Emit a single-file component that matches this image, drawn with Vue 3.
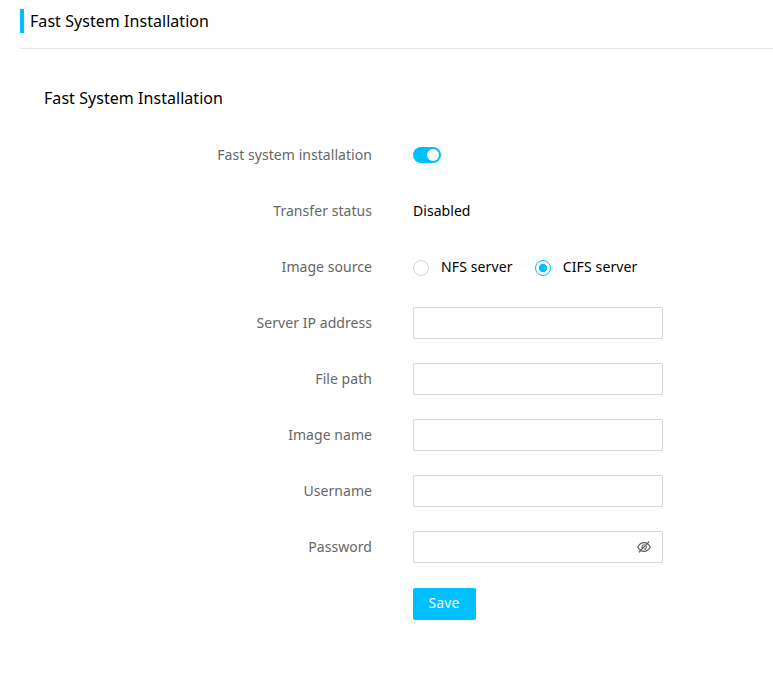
<script setup>
import { ref } from 'vue'

const enabled = ref(true)
const source = ref('cifs')
const sources = [
  { value: 'nfs', label: 'NFS server' },
  { value: 'cifs', label: 'CIFS server' },
]
const fields = [
  { id: 'ip', label: 'Server IP address' },
  { id: 'path', label: 'File path' },
  { id: 'image', label: 'Image name' },
  { id: 'user', label: 'Username' },
]
</script>

<template>
  <main class="page">
    <header class="page-head">
      <h1 class="title">Fast System Installation</h1>
    </header>
    <section class="panel">
      <h2 class="title subtitle">Fast System Installation</h2>
      <form class="form" @submit.prevent>
        <div class="row">
          <span class="label">Fast system installation</span>
          <button
            type="button"
            role="switch"
            class="switch"
            :class="{ on: enabled }"
            :aria-checked="enabled"
            @click="enabled = !enabled"
          ><span class="knob"></span></button>
        </div>
        <div class="row">
          <span class="label">Transfer status</span>
          <span class="value">Disabled</span>
        </div>
        <div class="row">
          <span class="label">Image source</span>
          <div class="radios">
            <label v-for="s in sources" :key="s.value" class="radio">
              <input v-model="source" type="radio" name="source" :value="s.value" />
              <span class="value">{{ s.label }}</span>
            </label>
          </div>
        </div>
        <div v-for="f in fields" :key="f.id" class="row">
          <label class="label" :for="f.id">{{ f.label }}</label>
          <input :id="f.id" class="box" type="text" />
        </div>
        <div class="row">
          <label class="label" for="pwd">Password</label>
          <div class="box password">
            <input id="pwd" type="password" />
            <svg class="eye" viewBox="0 0 14 14" fill="none" stroke="#5c5c5c" stroke-width="1.1">
              <path d="M.7 7C2.2 4.1 4.3 2.6 7 2.600S11.800 4.100 13.300 7C11.800 9.900 9.700 11.400 7 11.400S2.200 9.900.7 7Z" />
              <path d="M5.600 8.700A2.300 2.300 0 0 1 7.600 4.800M9.100 6A2.300 2.300 0 0 1 6.800 9.300" />
              <path d="M1.900 12.400 12.100 1.600" stroke-width="1.300" />
            </svg>
          </div>
        </div>
        <div class="row actions">
          <span></span>
          <button type="submit" class="save">Save</button>
        </div>
      </form>
    </section>
  </main>
</template>

<style>
body {
  background: #fff;
}
</style>

<style scoped>
.page {
  box-sizing: border-box;
  height: 694px;
  padding-left: 20px;
  overflow: hidden;
  font-family: 'Noto Sans', 'Open Sans', sans-serif;
  font-size: 14px;
  letter-spacing: 0.05px;
  color: #000;
}
.page-head {
  box-sizing: border-box;
  height: 49px;
  padding-top: 9px;
  border-bottom: 1px solid #e6e6e6;
}
.title {
  margin: 0;
  padding-left: 6px;
  border-left: 4px solid #00bfff;
  font-size: 16px;
  font-weight: 400;
  line-height: 24px;
  letter-spacing: 0.05px;
}
.panel {
  padding: 37px 24px 0;
}
.subtitle {
  padding-left: 0;
  border-left: 0;
}
.form {
  display: grid;
  gap: 24px;
  margin-top: 29px;
}
.row {
  display: grid;
  grid-template-columns: 328px 250px;
  column-gap: 41px;
  align-items: center;
  height: 32px;
}
.actions {
  margin-top: 1px;
}
.label {
  color: #666;
  text-align: right;
  line-height: 32px;
}
.value {
  line-height: 32px;
}
.switch {
  box-sizing: border-box;
  display: flex;
  width: 28px;
  height: 16px;
  padding: 2px;
  border: 0;
  border-radius: 8px;
  background: #bfbfbf;
}
.switch.on {
  justify-content: flex-end;
  background: #00bfff;
}
.knob {
  width: 12px;
  height: 12px;
  border-radius: 50%;
  background: #fff;
}
.radios {
  display: flex;
  gap: 22px;
}
.radio {
  display: flex;
  align-items: center;
  gap: 12px;
}
.radio .value {
  letter-spacing: 0.13px;
}
.radio input {
  appearance: none;
  box-sizing: border-box;
  width: 16px;
  height: 16px;
  margin: 2px 0 0;
  border: 1px solid #d9d9d9;
  border-radius: 50%;
}
.radio input:checked {
  border-color: #00bfff;
  background: radial-gradient(circle, #00bfff 3.8px, #fff 4.4px);
}
.box {
  box-sizing: border-box;
  width: 250px;
  height: 32px;
  padding: 0 11px;
  border: 1px solid #d9d9d9;
  border-radius: 2px;
  background: #fff;
  font: inherit;
}
.password {
  display: flex;
  align-items: center;
}
.password input {
  flex: 1;
  min-width: 0;
  padding: 0;
  border: 0;
  outline: 0;
  font: inherit;
}
.eye {
  width: 14px;
  height: 14px;
}
.save {
  width: 63px;
  height: 32px;
  padding: 0 1px 4px 0;
  border: 0;
  border-radius: 2px;
  background: #00bfff;
  color: #fff;
  font: inherit;
  letter-spacing: 0.1px;
}
</style>
